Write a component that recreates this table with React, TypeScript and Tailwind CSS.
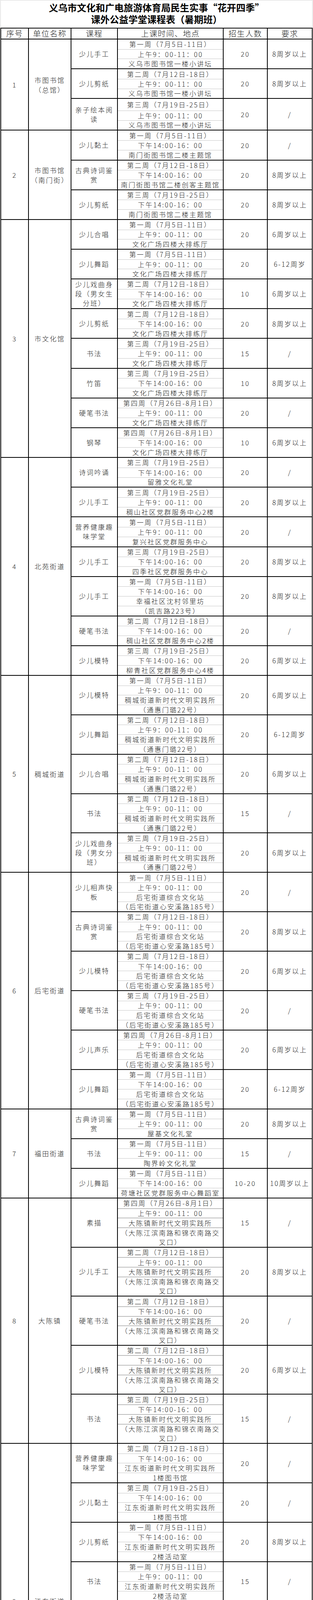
import React from 'react';

type Course = { name: string[]; week: string; time: string; loc: string[][]; n: string; req: string; tallTop?: boolean };
type Block = { no: string; unit: string[]; courses: Course[]; thick?: boolean };

const W1 = '第一周（7月5日-11日）';
const W2 = '第二周（7月12日-18日）';
const W3 = '第三周（7月19日-25日）';
const W4 = '第四周（7月26日-8月1日）';
const AM = '上午9：00-11：00';
const PM = '下午14:00-16：00';

const c = (name: string, week: string, time: string, loc: string, n: string, req: string, tallTop?: boolean): Course => ({
  name: name.split('|'),
  week,
  time,
  loc: loc.split('|').map((s) => s.split('^')),
  n,
  req,
  tallTop,
});

const L3 = '文化广场四楼大排练厅';
const L5 = '稠城街道新时代文明实践所|（通惠门璐22号）';
const L6 = '后宅街道综合文化站|（后宅街道心安溪路185号）';
const L8 = '大陈镇新时代文明实践所|（大陈江滨南路和锦衣南路交^叉口）';
const JD = '江东街道新时代文明实践所';
const CX = '城西新时代文明实践所|（城西街道伏龙山北路龙山公^园内）';
const SX = '苏溪镇新时代文明实践所三楼';

const blocks: Block[] = [
  {
    no: '1',
    unit: ['市图书馆', '（总馆）'],
    courses: [
      c('少儿手工', W1, AM, '义乌市图书馆一楼小讲坛', '20', '8周岁以上'),
      c('少儿剪纸', W2, AM, '义乌市图书馆一楼小讲坛', '20', '8周岁以上'),
      c('亲子绘本阅|读', W3, AM, '义乌市图书馆一楼小讲坛', '20', '/', true),
    ],
  },
  {
    no: '2',
    unit: ['市图书馆', '（南门街）'],
    courses: [
      c('少儿黏土', W1, PM, '南门街图书馆二楼主题馆', '20', '/'),
      c('古典诗词鉴|赏', W2, PM, '南门街图书馆二楼创客主题馆', '20', '8周岁以上'),
      c('少儿剪纸', W3, PM, '南门街图书馆二楼主题馆', '20', '8周岁以上'),
    ],
  },
  {
    no: '3',
    unit: ['市文化馆'],
    courses: [
      c('少儿合唱', W1, AM, L3, '20', '6周岁以上'),
      c('少儿舞蹈', W1, AM, L3, '20', '6-12周岁'),
      c('少儿戏曲身|段（男女生|分班）', W2, PM, L3, '10', '6周岁以上'),
      c('少儿剪纸', W2, PM, L3, '20', '8周岁以上'),
      c('书法', W3, AM, L3, '15', '/'),
      c('竹笛', W3, PM, L3, '10', '8周岁以上'),
      c('硬笔书法', W4, AM, L3, '20', '/'),
      c('钢琴', W4, PM, L3, '10', '6周岁以上'),
    ],
  },
  {
    no: '4',
    unit: ['北苑街道'],
    courses: [
      c('诗词吟诵', W3, PM, '留雅文化礼堂', '20', '/'),
      c('少儿手工', W3, AM, '稠山社区党群服务中心2楼', '20', '8周岁以上'),
      c('营养健康趣|味学堂', W1, AM, '复兴社区党群服务中心', '20', '/'),
      c('少儿手工', W3, PM, '四季社区党群服务中心', '20', '8周岁以上'),
      c('少儿手工', W1, PM, '幸福社区沈村邻里坊|（凯吉路223号）', '20', '8周岁以上'),
      c('硬笔书法', W2, PM, '稠山社区党群服务中心2楼', '20', '/'),
      c('少儿模特', W3, PM, '柳青社区党群服务中心4楼', '20', '6周岁以上'),
    ],
  },
  {
    no: '5',
    unit: ['稠城街道'],
    courses: [
      c('少儿模特', W1, AM, L5, '20', '6周岁以上'),
      c('少儿舞蹈', W2, AM, L5, '20', '6-12周岁'),
      c('少儿合唱', W2, AM, L5, '20', '6周岁以上'),
      c('书法', W2, AM, L5, '15', '/'),
      c('少儿戏曲身|段（男女分|班）', W3, AM, L5, '20', '6周岁以上'),
    ],
  },
  {
    no: '6',
    unit: ['后宅街道'],
    courses: [
      c('少儿相声快|板', W1, AM, L6, '20', '/'),
      c('古典诗词鉴|赏', W2, AM, L6, '20', '8周岁以上'),
      c('少儿模特', W2, PM, L6, '20', '6周岁以上'),
      c('硬笔书法', W3, AM, L6, '20', '/'),
      c('少儿声乐', W4, AM, L6, '20', '6周岁以上'),
      c('少儿舞蹈', W1, PM, L6, '20', '6-12周岁'),
    ],
  },
  {
    no: '7',
    unit: ['福田街道'],
    courses: [
      c('古典诗词鉴|赏', W1, AM, '屋基文化礼堂', '20', '8周岁以上'),
      c('书法', W1, AM, '陶界岭文化礼堂', '15', '/'),
      c('少儿舞蹈', W1, PM, '荷塘社区党群服务中心舞蹈室', '10-20', '10周岁以上'),
    ],
  },
  {
    no: '8',
    unit: ['大陈镇'],
    thick: true,
    courses: [
      c('素描', W4, AM, L8, '15', '/'),
      c('少儿手工', W2, AM, L8, '20', '8周岁以上'),
      c('硬笔书法', W2, PM, L8, '20', '/'),
      c('少儿模特', W2, PM, L8, '20', '6周岁以上'),
      c('书法', W3, PM, L8, '15', '/'),
    ],
  },
  {
    no: '9',
    unit: ['江东街道'],
    courses: [
      c('营养健康趣|味学堂', W2, PM, JD + '|1楼图书馆', '20', '/'),
      c('少儿黏土', W3, PM, JD + '|1楼图书馆', '20', '/'),
      c('少儿剪纸', W1, PM, JD + '|2楼活动室', '20', '8周岁以上'),
      c('书法', W1, AM, JD + '|2楼活动室', '15', '/'),
      c('硬笔书法', W2, AM, JD + '|2楼活动室', '20', '/'),
      c('少儿声乐', W1, AM, JD + '|2楼舞蹈房', '20', '6周岁以上'),
      c('少儿模特', W1, PM, JD + '|2楼舞蹈房', '20', '6周岁以上'),
      c('少儿舞蹈', W2, PM, JD + '|2楼舞蹈房', '20', '6-12周岁'),
    ],
  },
  {
    no: '10',
    unit: ['城西街道'],
    courses: [
      c('少儿剪纸', W4, AM, CX, '20', '8周岁以上'),
      c('少儿手工', W2, PM, CX, '20', '8周岁以上'),
      c('古典诗词鉴|赏', W3, PM, '城西图书馆', '20', '8周岁以上'),
      c('书法', W2, AM, CX, '15', '/'),
      c('少儿舞蹈', W2, AM, '何泮山文化礼堂', '20', '6-12周岁'),
      c('道情', W3, AM, '城西文化馆', '20', '/'),
    ],
  },
  {
    no: '11',
    unit: ['稠江街道'],
    courses: [
      c('少儿声乐', W2, PM, '稠江街道新时代文明实践所', '20', '6周岁以上'),
      c(
        '硬笔书法',
        W3,
        PM,
        '稠江街道图书馆|（戚继光路501号，稠江街道^办事处后院，双创街A1幢二^楼）',
        '20',
        '/'
      ),
      c('营养健康趣|味学堂', W4, PM, '稠江街道新时代文明实践所', '30', '/'),
    ],
  },
  {
    no: '12',
    unit: ['廿三里街道'],
    courses: [
      c('诗词吟诵', W3, AM, '李塘文化礼堂', '20', '/'),
      c('少儿戏曲身|段（男女生|分班）', W2, AM, '新时代文明实践所五楼舞蹈室', '10', '6周岁以上'),
      c('少儿模特', W4, AM, '金麟社区邻里中心二楼', '20', '6周岁以上'),
      c('书法', W2, PM, '里忠文化礼堂', '15', '/'),
      c('少儿剪纸', W2, PM, '后义文化礼堂', '20', '8周岁以上'),
      c('硬笔书法', W1, AM, '廿三里村文化礼堂', '20', '/'),
      c('少儿声乐', W2, PM, '廿三里村文化礼堂', '20', '6周岁以上'),
      c('营养趣味学|堂', W3, PM, '廿三里宾王扑克', '20', '/'),
      c('少儿科学实|验课', W2, AM, '廿三里宾王扑克', '20', '/'),
    ],
  },
  {
    no: '13',
    unit: ['上溪镇'],
    courses: [c('书法', W2, AM, '上溪镇黄山小学内', '15', '/')],
  },
  {
    no: '14',
    unit: ['苏溪镇'],
    courses: [
      c('少儿手工', W3, AM, SX, '20', '8周岁以上'),
      c('少儿黏土', W4, PM, SX, '20', '/'),
      c('少儿剪纸', W2, PM, SX, '20', '8周岁以上'),
      c('书法', W2, AM, SX, '15', '/'),
    ],
  },
];

const H: Record<number, string> = {
  1: 'h-[24.72px]',
  2: 'h-[49.44px]',
  3: 'h-[74.16px]',
};

function SubRow({
  lines,
  first,
  thick,
  tall,
}: {
  lines: string[];
  first: boolean;
  thick?: boolean;
  tall?: boolean;
}) {
  const line = first ? '' : thick ? 'border-t-2 border-[#bcbcbc]' : 'border-t border-[#c6c6c6]';
  const h = tall ? 'h-[29.6px]' : H[lines.length];
  return (
    <div className={`${h} shrink-0 ${line} flex flex-col items-center justify-center`}>
      {lines.map((l, i) => (
        <div key={i} className="leading-[24px] whitespace-nowrap">
          {l}
        </div>
      ))}
    </div>
  );
}

function CourseRow({ course, thick }: { course: Course; thick?: boolean }) {
  const rows: string[][] = [[course.week], [course.time], ...course.loc];
  return (
    <div className="flex border-b-2 border-black">
      <div className="w-[119px] shrink-0 border-r-2 border-black flex flex-col items-center justify-center">
        {course.name.map((n, i) => (
          <div key={i} className="leading-[24px] whitespace-nowrap">
            {n}
          </div>
        ))}
      </div>
      <div className="w-[271px] shrink-0 border-r-2 border-black flex flex-col">
        {rows.map((r, i) => (
          <SubRow key={i} lines={r} first={i === 0} thick={thick} tall={i === 0 && course.tallTop} />
        ))}
      </div>
      <div className="w-[113px] shrink-0 border-r-2 border-black flex items-center justify-center whitespace-nowrap">
        {course.n}
      </div>
      <div className="flex-1 flex items-center justify-center whitespace-nowrap">{course.req}</div>
    </div>
  );
}

function BlockRows({ block }: { block: Block }) {
  return (
    <div className="flex">
      <div className="w-[71px] shrink-0 border-r-2 border-b-2 border-black flex items-center justify-center">
        {block.no}
      </div>
      <div className="w-[109px] shrink-0 border-r-2 border-b-2 border-black flex flex-col items-center justify-center">
        {block.unit.map((u, i) => (
          <div key={i} className="leading-[25px] whitespace-nowrap">
            {u}
          </div>
        ))}
      </div>
      <div className="flex-1 flex flex-col">
        {block.courses.map((co, i) => (
          <CourseRow key={i} course={co} thick={block.thick} />
        ))}
      </div>
    </div>
  );
}

export default function App() {
  return (
    <div className="w-[802px] bg-white text-[#1a1a1a] font-['Noto_Sans_CJK_SC','Noto_Sans',sans-serif]">
      <div className="ml-[1px] w-[800px] h-[71px] border-x border-t border-[#d4d4d4] flex flex-col items-center pt-[3px]">
        <div className="text-[24px] font-bold leading-[30px] text-black whitespace-nowrap">
          义乌市文化和广电旅游体育局民生实事“花开四季”
        </div>
        <div className="text-[24px] font-bold leading-[30px] text-black whitespace-nowrap">
          课外公益学堂课程表（暑期班）
        </div>
      </div>
      <div className="ml-[1px] w-[800px] border-x-2 border-black text-[17px] tracking-[2.5px] font-light">
        <div className="flex h-[30px] border-t-2 border-b-2 border-black text-[20px] tracking-[1.5px]">
          <div className="w-[71px] shrink-0 border-r-2 border-black flex items-center justify-center">序号</div>
          <div className="w-[109px] shrink-0 border-r-2 border-black flex items-center justify-center">单位名称</div>
          <div className="w-[119px] shrink-0 border-r-2 border-black flex items-center justify-center">课程</div>
          <div className="w-[271px] shrink-0 border-r-2 border-black flex items-center justify-center">
            上课时间、地点
          </div>
          <div className="w-[113px] shrink-0 border-r-2 border-black flex items-center justify-center">招生人数</div>
          <div className="flex-1 flex items-center justify-center">要求</div>
        </div>
        {blocks.map((b) => (
          <BlockRows key={b.no} block={b} />
        ))}
      </div>
    </div>
  );
}
